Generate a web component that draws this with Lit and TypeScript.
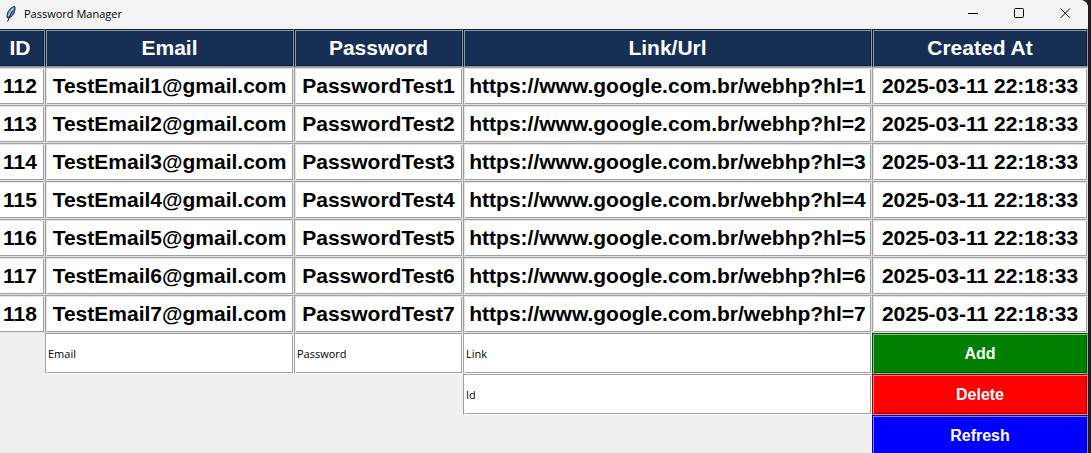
import { LitElement, html, css } from "lit";
import { customElement, state } from "lit/decorators.js";

interface Account {
  id: number;
  email: string;
  password: string;
  link: string;
  createdAt: string;
}

const COLUMNS = ["ID", "Email", "Password", "Link/Url", "Created At"];

const ACCOUNTS: Account[] = [1, 2, 3, 4, 5, 6, 7].map((n) => ({
  id: 111 + n,
  email: `TestEmail${n}@gmail.com`,
  password: `PasswordTest${n}`,
  link: `https://www.google.com.br/webhp?hl=${n}`,
  createdAt: "2025-03-11 22:18:33",
}));

@customElement("title-bar")
export class TitleBar extends LitElement {
  static styles = css`
    :host {
      display: flex;
      align-items: center;
      height: 29px;
      box-sizing: border-box;
      padding-left: 3px;
      padding-bottom: 2px;
      background: #f3f3f3;
      border-top-right-radius: 8px;
      font: 12px/16px "Open Sans", "Noto Sans", sans-serif;
      color: #000;
    }
    .feather {
      width: 16px;
      height: 16px;
      margin-right: 5px;
    }
    .title {
      flex: 1;
      margin: 0;
      font-size: 11px;
      font-weight: 400;
    }
    .control {
      display: grid;
      place-items: center;
      width: 46px;
      height: 27px;
      padding: 0;
      border: 0;
      background: none;
    }
    .control svg {
      width: 11px;
      height: 11px;
      fill: none;
      stroke: #000;
    }
  `;

  render() {
    return html`
      <svg class="feather" viewBox="0 0 16 16" aria-hidden="true">
        <path d="M11.6 .4C8.4 1 5 4.600 4.300 8.400L4 11.400L5.600 12.200C8.800 11 11 8 11.600 5.200C12.200 3.200 12.400 1.600 11.600 .4Z" fill="#4d86c6" stroke="#16202c" stroke-width="1" />
        <path d="M10.200 2.200C8 4.200 6.200 7.200 5.400 10" fill="none" stroke="#b4d8f8" stroke-width="1.400" />
        <path d="M9.600 4.800C7.400 8 5.800 11.600 4.700 15.600" fill="none" stroke="#16202c" stroke-width="1" />
      </svg>
      <h1 class="title">Password Manager</h1>
      <button class="control" aria-label="Minimize">
        <svg viewBox="0 0 11 11"><path d="M0 5.500H10" /></svg>
      </button>
      <button class="control" aria-label="Maximize">
        <svg viewBox="0 0 11 11"><rect x=".5" y=".5" width="9" height="9" rx="1" /></svg>
      </button>
      <button class="control" aria-label="Close">
        <svg viewBox="0 0 11 11"><path d="M.5 .5L10 10M10 .5L.5 10" /></svg>
      </button>
    `;
  }
}

@customElement("app-root")
export class AppRoot extends LitElement {
  static styles = css`
    :host {
      display: block;
      min-height: 100vh;
      box-sizing: border-box;
      padding-right: 3px;
      background: #1b1b25;
      font-family: "Liberation Sans", Arial, sans-serif;
    }
    .window {
      min-height: 100vh;
      background: #f0f0f0;
      border-top-right-radius: 8px;
    }
    .content {
      height: calc(100vh - 29px);
      overflow: hidden;
    }
    .accounts,
    .accounts thead,
    .accounts tbody {
      display: block;
    }
    .row {
      display: grid;
      grid-template-columns: 45fr 249fr 169fr 409fr 216fr;
    }
    /* Two-pixel groove: the outer line is the border, the inner one the shadow. */
    .cell {
      --fill: #fff;
      --dark: #a0a0a0;
      --light: #e3e3e3;
      box-sizing: border-box;
      min-width: 0;
      height: 38px;
      padding: 0;
      margin: 0;
      border: 1px solid;
      border-color: var(--dark) var(--light) var(--light) var(--dark);
      border-radius: 0;
      box-shadow: inset 1px 1px var(--light), inset -1px -1px var(--dark);
      background: var(--fill);
      font: bold 21px/36px "Liberation Sans", Arial, sans-serif;
      text-align: center;
      white-space: nowrap;
      color: #000;
    }
    .cell:first-child {
      border-left: 0;
      padding-right: 4px;
      box-shadow: inset 0 1px var(--light), inset -1px -1px var(--dark);
    }
    .heading {
      --fill: #172f54;
      --dark: #0e1c32;
      --light: #8b97a9;
      color: #fff;
    }
    .entry {
      --light: #fff;
      height: 41px;
      padding: 0 2px;
      font: 11px/16px "Open Sans", "Noto Sans", sans-serif;
      text-align: left;
      outline: 0;
    }
    .email {
      grid-column: 2;
    }
    .link {
      grid-column: 4;
    }
    .action {
      grid-column: 5;
      height: 41px;
      font-size: 16px;
      color: #fff;
    }
    .add {
      --fill: #008000;
      --dark: #004d00;
      --light: #7fbf7f;
    }
    .delete {
      --fill: #f00;
      --dark: #900;
      --light: #ff7f7f;
    }
    .refresh {
      --fill: #00f;
      --dark: #009;
      --light: #7f7fff;
    }
  `;

  @state() private accounts = ACCOUNTS;

  render() {
    return html`
      <div class="window">
        <title-bar></title-bar>
        <main class="content">
          <table class="accounts">
            <thead>
              <tr class="row">
                ${COLUMNS.map((name) => html`<th class="cell heading" scope="col">${name}</th>`)}
              </tr>
            </thead>
            <tbody>
              ${this.accounts.map(
                (account) => html`
                  <tr class="row">
                    <td class="cell">${account.id}</td>
                    <td class="cell">${account.email}</td>
                    <td class="cell">${account.password}</td>
                    <td class="cell">${account.link}</td>
                    <td class="cell">${account.createdAt}</td>
                  </tr>
                `
              )}
            </tbody>
          </table>
          <form class="row" @submit=${(event: Event) => event.preventDefault()}>
            <span></span>
            <input class="cell entry email" aria-label="Email" value="Email" />
            <input class="cell entry" aria-label="Password" value="Password" />
            <input class="cell entry link" aria-label="Link" value="Link" />
            <button class="cell action add" type="button">Add</button>
            <input class="cell entry link" aria-label="Id" value="Id" />
            <button class="cell action delete" type="button">Delete</button>
            <button class="cell action refresh" type="button">Refresh</button>
          </form>
        </main>
      </div>
    `;
  }
}
